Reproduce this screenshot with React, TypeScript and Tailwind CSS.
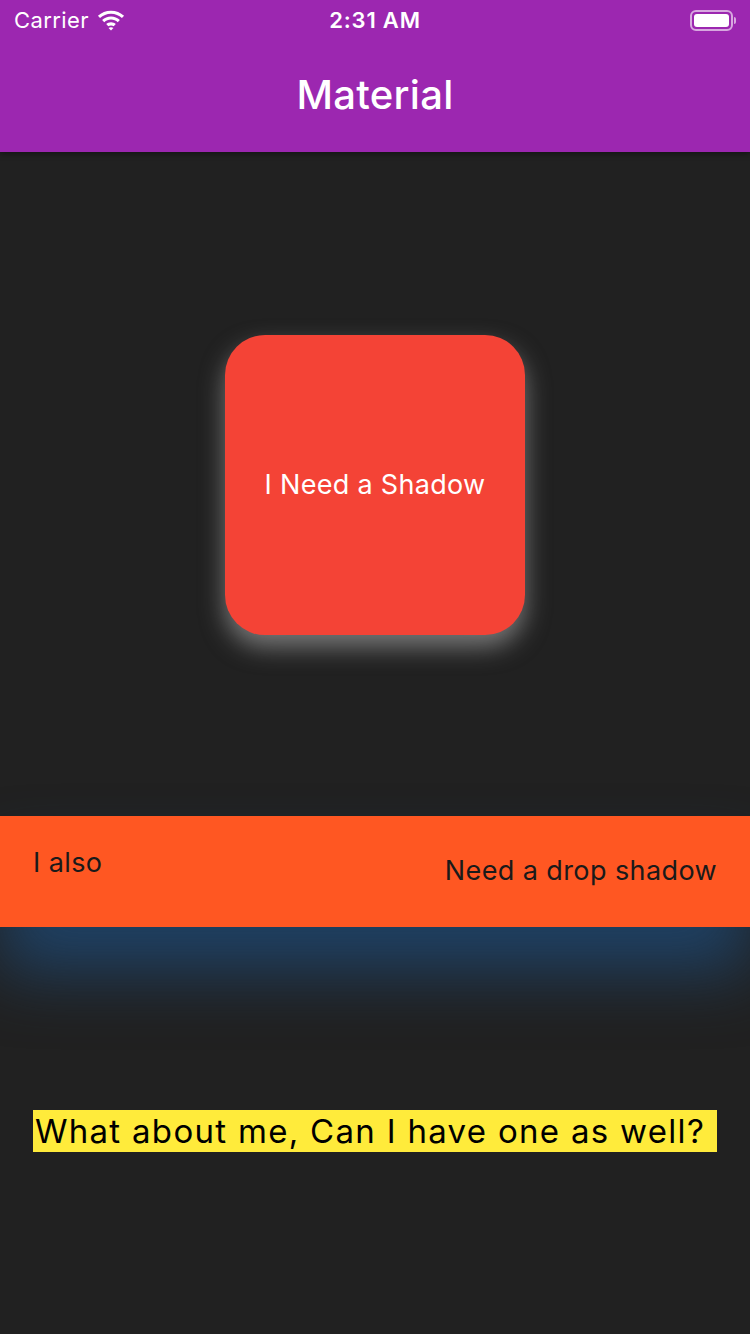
import React from "react";

function Wifi() {
  return (
    <svg width="28" height="21" viewBox="0 0 24 18" fill="white">
      <path d="M12 3.2c3.6 0 6.9 1.4 9.4 3.7l1.8-1.9C20.2 2.2 16.3.6 12 .6S3.8 2.2.8 5l1.8 1.9C5.1 4.6 8.4 3.2 12 3.2z" />
      <path d="M12 8.2c2.2 0 4.2.8 5.8 2.2l1.8-1.9C17.6 6.7 14.9 5.6 12 5.6S6.4 6.7 4.4 8.5l1.8 1.9C7.8 9 9.8 8.2 12 8.2z" />
      <path d="M12 13.2c.9 0 1.7.3 2.3.8l1.8-1.9c-1.1-.9-2.5-1.5-4.1-1.5s-3 .6-4.1 1.5L9.7 14c.6-.5 1.4-.8 2.3-.8z" />
      <path d="M12 17.6l2.1-2.2c-.6-.4-1.3-.6-2.1-.6s-1.5.2-2.1.6z" />
    </svg>
  );
}

function Battery() {
  return (
    <div className="flex items-center">
      <div className="flex h-[21px] w-[43px] items-center rounded-[6px] border-2 border-white/60 p-[2px]">
        <div className="h-full w-full rounded-[3px] bg-white" />
      </div>
      <div className="ml-[1px] h-[7px] w-[2px] rounded-r-sm bg-white/60" />
    </div>
  );
}

export default function App() {
  return (
    <div
      className="flex h-[1334px] w-[750px] flex-col overflow-hidden bg-[#212121]"
      style={{ fontFamily: "Inter, 'Noto Sans', sans-serif" }}
    >
      <header className="relative z-10 bg-[#9c27b0] shadow-[0_2px_6px_rgba(0,0,0,0.4)]">
        <div className="relative flex h-[40px] items-center px-[14px] text-white">
          <div className="flex items-center gap-[8px] text-[22px] tracking-[0.4px]">
            <span>Carrier</span>
            <Wifi />
          </div>
          <span className="absolute left-1/2 -translate-x-1/2 text-[22px] font-semibold tracking-[0.8px]">2:31 AM</span>
          <div className="ml-auto">
            <Battery />
          </div>
        </div>
        <div className="flex h-[112px] items-center justify-center pb-[2px]">
          <h1 className="text-[40px] font-medium tracking-[0.3px] text-white">Material</h1>
        </div>
      </header>

      <main className="flex flex-1 flex-col">
        <div className="flex h-[664px] items-center justify-center pt-[2px]">
          <div className="flex h-[300px] w-[300px] items-center justify-center rounded-[40px] bg-[#f44336] shadow-[0_12px_24px_rgba(190,190,190,0.55)]">
            <span className="text-[27px] tracking-[0.3px] text-white">I Need a Shadow</span>
          </div>
        </div>

        <div className="relative flex h-[111px] items-center justify-between bg-[#ff5722] px-[33px] shadow-[0_45px_65px_rgba(30,70,112,0.85)]">
          <span className="mb-[16px] text-[27px] tracking-[0.4px] text-[#1a1a1a]">I also</span>
          <span className="text-[27px] tracking-[0.4px] text-[#1a1a1a]">Need a drop shadow</span>
        </div>

        <div className="flex justify-center pt-[183px]">
          <span className="bg-[#ffeb3b] pl-[2px] pr-[12px] text-[33px] leading-[42px] tracking-[1.3px] text-black">
            What about me, Can I have one as well?
          </span>
        </div>
      </main>
    </div>
  );
}
